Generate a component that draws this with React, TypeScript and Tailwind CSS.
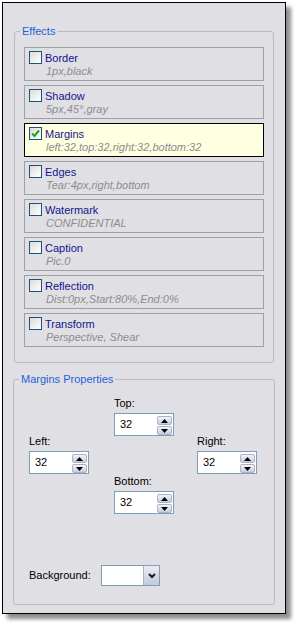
import type { ReactNode } from "react";

const EFFECTS = [
  { title: "Border", detail: "1px,black" },
  { title: "Shadow", detail: "5px,45°,gray" },
  { title: "Margins", detail: "left:32,top:32,right:32,bottom:32", checked: true },
  { title: "Edges", detail: "Tear:4px,right,bottom" },
  { title: "Watermark", detail: "CONFIDENTIAL" },
  { title: "Caption", detail: "Pic.0" },
  { title: "Reflection", detail: "Dist:0px,Start:80%,End:0%" },
  { title: "Transform", detail: "Perspective, Shear" },
];

function Checkbox({ checked }: { checked?: boolean }) {
  return (
    <span className="flex h-[13px] w-[13px] shrink-0 items-center justify-center border border-[#1c5180] bg-gradient-to-br from-[#dcdcd6] to-white">
      {checked && (
        <svg width="9" height="9" viewBox="0 0 9 9">
          <path d="M1 4.5 L3.5 7 L8 1.5" fill="none" stroke="#21a121" strokeWidth="2" />
        </svg>
      )}
    </span>
  );
}

function Group({ label, className, children }: { label: string; className: string; children: ReactNode }) {
  return (
    <fieldset className={`rounded-[3px] border border-[#bbbac3] ${className}`}>
      <legend className="ml-[5px] px-[2px] text-[11px] leading-[13px] text-[#1f5fd6]">{label}</legend>
      {children}
    </fieldset>
  );
}

function Arrow({ up }: { up?: boolean }) {
  return (
    <svg width="7" height="4" viewBox="0 0 7 4">
      <path d={up ? "M0 4 L3.5 0 L7 4 Z" : "M0 0 L7 0 L3.5 4 Z"} fill="#000" />
    </svg>
  );
}

function Spin({ value }: { value: string }) {
  return (
    <div className="flex h-[23px] w-[60px] border border-[#7f9db9] bg-white">
      <span className="flex-1 pl-[5px] text-[11px] leading-[21px] text-black">{value}</span>
      <div className="flex flex-col gap-[1px] pt-[2px] pr-[1px]">
        <span className="flex h-[9px] w-[15px] items-center justify-center rounded-[2px] border border-[#a9b2c7] bg-gradient-to-b from-[#f4f5f8] to-[#c8ccd9]">
          <Arrow up />
        </span>
        <span className="flex h-[9px] w-[15px] items-center justify-center rounded-[2px] border border-[#a9b2c7] bg-gradient-to-b from-[#f4f5f8] to-[#c8ccd9]">
          <Arrow />
        </span>
      </div>
    </div>
  );
}

function Field({ label, value }: { label: string; value: string }) {
  return (
    <div className="flex flex-col">
      <span className="text-[11px] leading-[13px] text-black">{label}</span>
      <div className="mt-[3px]">
        <Spin value={value} />
      </div>
    </div>
  );
}

export default function App() {
  return (
    <div className="h-[622px] w-[294px] bg-white pt-[2px] pl-[2px] font-['Liberation_Sans',Arial,sans-serif]">
      <div className="box-border flex h-[612px] w-[284px] flex-col border border-black bg-[#e0dfe4] pt-[22px] shadow-[5px_5px_4px_rgba(0,0,0,0.45)]">
        <Group label="Effects" className="ml-[11px] w-[260px]">
          <div className="flex flex-col gap-[4px] pt-[9px] pb-[15px] pl-[9px]">
            {EFFECTS.map((e) => (
              <div
                key={e.title}
                className={`flex h-[34px] w-[240px] gap-[3px] border pt-[3px] pl-[4px] ${
                  e.checked ? "border-black bg-[#ffffe1]" : "border-[#9f9fa4]"
                }`}
              >
                <Checkbox checked={e.checked} />
                <div className="flex flex-col pt-[1px]">
                  <span className="text-[11px] leading-[13px] text-[#14148c]">{e.title}</span>
                  <span className="pl-[1px] text-[11px] italic leading-[13px] text-[#8d8d8d]">{e.detail}</span>
                </div>
              </div>
            ))}
          </div>
        </Group>

        <Group label="Margins Properties" className="mt-[10px] ml-[10px] w-[262px]">
          <div className="flex flex-col pt-[11px] pb-[18px] pl-[15px]">
            <div className="flex items-start">
              <div className="pt-[38px]">
                <Field label="Left:" value="32" />
              </div>
              <div className="ml-[25px] flex flex-col">
                <Field label="Top:" value="32" />
                <div className="mt-[39px]">
                  <Field label="Bottom:" value="32" />
                </div>
              </div>
              <div className="ml-[23px] pt-[38px]">
                <Field label="Right:" value="32" />
              </div>
            </div>
            <div className="mt-[51px] flex items-center">
              <span className="w-[72px] text-[11px] leading-[13px] text-black">Background:</span>
              <div className="flex h-[21px] w-[59px] border border-[#7f9db9] bg-white">
                <span className="flex-1" />
                <span className="flex w-[16px] items-center justify-center border-l border-[#a9b2c7] bg-gradient-to-b from-[#eceef4] to-[#c3c7d8]">
                  <svg width="8" height="6" viewBox="0 0 8 6">
                    <path d="M1 1 L4 4 L7 1" fill="none" stroke="#1a1a1a" strokeWidth="2" />
                  </svg>
                </span>
              </div>
            </div>
          </div>
        </Group>
      </div>
    </div>
  );
}
